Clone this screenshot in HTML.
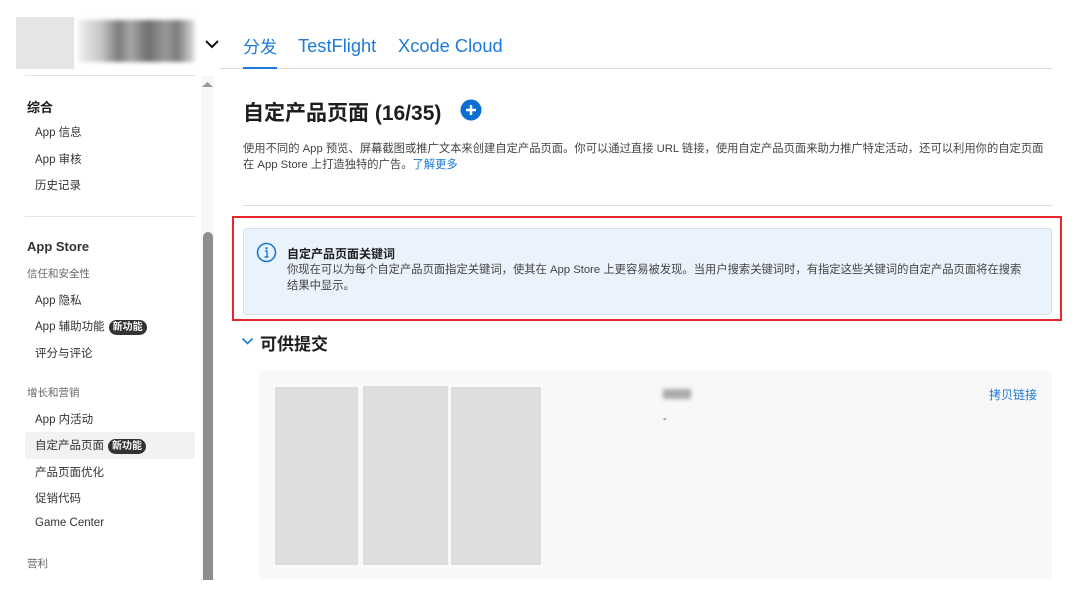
<!DOCTYPE html>
<html><head><meta charset="utf-8">
<style>
*{margin:0;padding:0;box-sizing:border-box}
body{width:1080px;height:596px;background:#fff;position:relative;overflow:hidden;font-family:"Liberation Sans","Noto Sans CJK SC",sans-serif;color:#1d1d1f}
.a{position:absolute;white-space:nowrap}
.side{font-size:11.5px;color:#333;left:35px}
.grp{font-size:10.5px;color:#666;left:27px}
.badge{display:inline-block;background:#333;color:#fff;font-size:10px;font-weight:bold;border-radius:8px;padding:1px 4px;margin-left:4px;line-height:13px}
</style></head><body>
<div class="a" style="left:16px;top:17px;width:58px;height:52px;background:#e5e5e7"></div>
<div class="a" style="left:78px;top:20px;width:117px;height:42px;background:linear-gradient(90deg,#eee,#bbb 20%,#666 35%,#999 45%,#555 60%,#888 75%,#666 85%,#ddd);filter:blur(2px);opacity:.85"></div>
<svg class="a" style="left:204px;top:39px" width="16" height="12"><path d="M2 2 L8 8 L14 2" stroke="#111" stroke-width="2" fill="none"/></svg>
<div class="a" style="left:243px;top:33px;font-size:17px;color:#1d7ad6">分发</div>
<div class="a" style="left:298px;top:35px;font-size:18.3px;color:#1d7ad6">TestFlight</div>
<div class="a" style="left:398px;top:35px;font-size:18.3px;color:#1d7ad6">Xcode Cloud</div>
<div class="a" style="left:220px;top:68px;width:832px;height:1px;background:#ddd"></div>
<div class="a" style="left:243px;top:67px;width:34px;height:2px;background:#1d7ad6"></div>
<div class="a" style="left:25px;top:75px;width:170px;height:1px;background:#e3e3e3"></div>
<div class="a" style="left:201px;top:76px;width:13px;height:504px;background:#f7f7f7"></div>
<svg class="a" style="left:201px;top:80px" width="13" height="8"><path d="M1 7 L6.5 2 L12 7Z" fill="#999"/></svg>
<div class="a" style="left:203px;top:232px;width:10px;height:348px;background:#8e8e8e;border-radius:5px 5px 0 0"></div>

<div class="a" style="left:27px;top:97px;font-size:13px;font-weight:bold">综合</div>
<div class="a side" style="top:124px">App 信息</div>
<div class="a side" style="top:151px">App 审核</div>
<div class="a side" style="top:177px">历史记录</div>
<div class="a" style="left:25px;top:216px;width:170px;height:1px;background:#e3e3e3"></div>
<div class="a" style="left:27px;top:239px;font-size:13px;font-weight:bold;color:#333">App Store</div>
<div class="a grp" style="top:266px">信任和安全性</div>
<div class="a side" style="top:292px">App 隐私</div>
<div class="a side" style="top:318px">App 辅助功能<span class="badge">新功能</span></div>
<div class="a side" style="top:345px">评分与评论</div>
<div class="a grp" style="top:385px">增长和营销</div>
<div class="a side" style="top:411px">App 内活动</div>
<div class="a" style="left:25px;top:432px;width:170px;height:27px;background:#f2f2f2;border-radius:3px"></div>
<div class="a side" style="top:437px">自定产品页面<span class="badge">新功能</span></div>
<div class="a side" style="top:464px">产品页面优化</div>
<div class="a side" style="top:490px">促销代码</div>
<div class="a side" style="top:517px">Game Center</div>
<div class="a grp" style="top:556px">营利</div>

<div class="a" style="left:243px;top:97px;font-size:21px;font-weight:bold">自定产品页面 (16/35)</div>
<svg class="a" style="left:460px;top:99px" width="22" height="22"><circle cx="11" cy="11" r="10.5" fill="#0a6fd0"/><path d="M11 6V16M6 11H16" stroke="#fff" stroke-width="2.5"/></svg>
<div class="a" style="left:243px;top:141px;font-size:11.3px;color:#444;line-height:16px">使用不同的 App 预览、屏幕截图或推广文本来创建自定产品页面。你可以通过直接 URL 链接，使用自定产品页面来助力推广特定活动，还可以利用你的自定页面<br>在 App Store 上打造独特的广告。<span style="color:#1d7ad6">了解更多</span></div>
<div class="a" style="left:243px;top:205px;width:809px;height:1px;background:#ddd"></div>

<div class="a" style="left:232px;top:216px;width:830px;height:105px;border:2px solid #e8262b"></div>
<div class="a" style="left:243px;top:228px;width:809px;height:87px;background:#eaf2fb;border:1px solid #cfe0f3;border-radius:4px"></div>
<svg class="a" style="left:256px;top:242px" width="21" height="21"><circle cx="10.5" cy="10.5" r="9" stroke="#1d7ad6" stroke-width="1.6" fill="none"/><circle cx="10.5" cy="6.3" r="1.2" fill="#1d7ad6"/><path d="M9 9H11V15M8.5 15H12.5" stroke="#1d7ad6" stroke-width="1.4" fill="none"/></svg>
<div class="a" style="left:287px;top:245px;font-size:12px;font-weight:bold">自定产品页面关键词</div>
<div class="a" style="left:287px;top:262px;font-size:11.3px;color:#444;line-height:16px">你现在可以为每个自定产品页面指定关键词，使其在 App Store 上更容易被发现。当用户搜索关键词时，有指定这些关键词的自定产品页面将在搜索<br>结果中显示。</div>

<svg class="a" style="left:241px;top:337px" width="13" height="9"><path d="M1.5 1.5 L6.5 6.5 L11.5 1.5" stroke="#1d7ad6" stroke-width="1.6" fill="none"/></svg>
<div class="a" style="left:260px;top:330px;font-size:17px;font-weight:bold">可供提交</div>
<div class="a" style="left:259px;top:371px;width:793px;height:208px;background:#f8f8f8;border-radius:4px"></div>
<div class="a" style="left:275px;top:387px;width:83px;height:178px;background:#dedcde"></div>
<div class="a" style="left:363px;top:386px;width:85px;height:179px;background:#dedcde"></div>
<div class="a" style="left:451px;top:387px;width:90px;height:178px;background:#dedcde"></div>
<div class="a" style="left:663px;top:389px;width:28px;height:10px;background:#aaa;filter:blur(2px)"></div>
<div class="a" style="left:663px;top:413px;font-size:11px;color:#444">-</div>
<div class="a" style="left:989px;top:386px;font-size:12px;color:#1d7ad6">拷贝链接</div>
</body></html>
